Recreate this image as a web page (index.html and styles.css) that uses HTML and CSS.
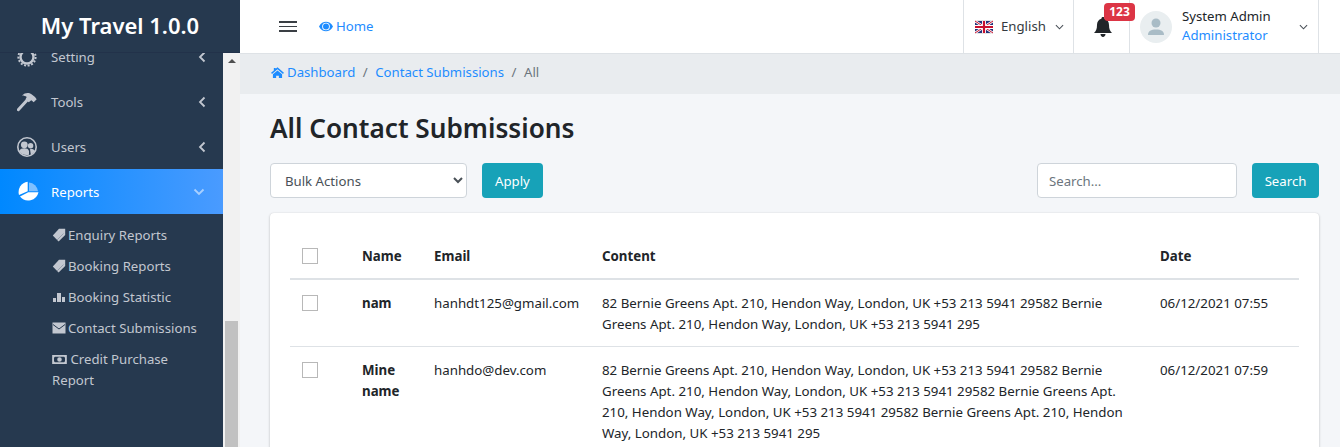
FILE: index.html
```html
<!DOCTYPE html>
<html lang="en">
<head>
  <meta charset="UTF-8">
  <meta name="viewport" content="width=device-width, initial-scale=1.0">
  <title>All Contact Submissions</title>
  <link rel="stylesheet" href="styles.css">
</head>
<body>
  <aside class="sidebar">
    <div class="brand">My Travel 1.0.0</div>
    <div class="sidebar-scroll">
      <nav class="side-nav">
        <a class="side-item">
          <svg class="side-icon" viewBox="0 0 20 20"><circle cx="10" cy="10" r="6.5" fill="none" stroke="currentColor" stroke-width="2.4"/><circle cx="10" cy="10" r="8.6" fill="none" stroke="currentColor" stroke-width="2" stroke-dasharray="2 1.6"/></svg>
          <span class="side-label">Setting</span>
          <svg class="side-caret" viewBox="0 0 8 12"><path d="M6.5 1.5 2 6l4.5 4.5" fill="none" stroke="currentColor" stroke-width="1.8"/></svg>
        </a>
        <a class="side-item">
          <svg class="side-icon" viewBox="0 0 20 20"><path d="M1.300 17.700 10 8.300" fill="none" stroke="currentColor" stroke-width="3" stroke-linecap="round"/><path d="M5 3.500C8 .3 12 .3 14.500 2.300L18 5 19.700 7.200 16.700 10.300 14.300 8.200 11.700 10.300 8.500 7.200 9.700 5C8.500 4 7 3.500 5 3.500Z" fill="currentColor"/></svg>
          <span class="side-label">Tools</span>
          <svg class="side-caret" viewBox="0 0 8 12"><path d="M6.5 1.5 2 6l4.5 4.5" fill="none" stroke="currentColor" stroke-width="1.8"/></svg>
        </a>
        <a class="side-item">
          <svg class="side-icon" viewBox="0 0 20 20"><circle cx="10" cy="10" r="9.200" fill="#26394f" stroke="currentColor" stroke-width="1.600"/><circle cx="7.300" cy="7.800" r="3.400" fill="currentColor"/><path d="M2.200 14C3 11.800 5 11.200 7.300 11.200S11.400 11.800 12 14V17.800C8 18.800 4 17.400 2.200 14Z" fill="currentColor"/><circle cx="13.600" cy="8.800" r="2.700" fill="currentColor"/><path d="M13 12.200C15 11.800 17.200 12.400 17.800 14 17 15.600 15.400 17 13.800 17.500Z" fill="currentColor"/></svg>
          <span class="side-label">Users</span>
          <svg class="side-caret" viewBox="0 0 8 12"><path d="M6.5 1.5 2 6l4.5 4.5" fill="none" stroke="currentColor" stroke-width="1.8"/></svg>
        </a>
        <a class="side-item active">
          <svg class="side-icon pie" viewBox="0 0 22 22"><path d="M10.700 .7V10.300L2 14A10.500 10.500 0 0 1 10.700 .7Z" fill="#fff"/><path d="M12 1.500A10 10 0 0 1 21 10.300H12Z" fill="#7fc0ff"/><path d="M3 15.500 11.300 11.300H21.500A10.500 10.500 0 0 1 3 15.500Z" fill="#fff"/></svg>
          <span class="side-label">Reports</span>
          <svg class="side-caret down" viewBox="0 0 12 8"><path d="M1.500 1.500 6 6l4.500-4.500" fill="none" stroke="currentColor" stroke-width="1.800"/></svg>
        </a>
        <ul class="sub-nav">
          <li><svg class="sub-icon" viewBox="0 0 14 14"><path d="M7 .8H13.200V7L6.600 13.400 .8 7.400Z" fill="currentColor"/><path d="M5 12 11.500 5.500" stroke="#8a95a3" stroke-width=".8"/></svg>Enquiry Reports</li>
          <li><svg class="sub-icon" viewBox="0 0 14 14"><path d="M7 .8H13.200V7L6.600 13.400 .8 7.400Z" fill="currentColor"/><path d="M5 12 11.500 5.500" stroke="#8a95a3" stroke-width=".8"/></svg>Booking Reports</li>
          <li><svg class="sub-icon" viewBox="0 0 14 14"><path d="M1 8H4V12H1ZM5 3H9V12H5ZM10 7H13V12H10Z" fill="currentColor"/></svg>Booking Statistic</li>
          <li><svg class="sub-icon" viewBox="0 0 14 12"><rect x=".5" y=".5" width="13" height="11" fill="currentColor"/><path d="M1 2.500 7 7 13 2.500" fill="none" stroke="#26394f" stroke-width="1"/></svg>Contact Submissions</li>
          <li><svg class="sub-icon wide" viewBox="0 0 16 12"><path fill-rule="evenodd" d="M0 1H16V11H0ZM3 3 2 4V8L3 9H13L14 8V4L13 3ZM8 3.500A2.500 2.500 0 1 1 8 8.500 2.500 2.500 0 0 1 8 3.500Z" fill="currentColor"/></svg> Credit Purchase Report</li>
        </ul>
      </nav>
      <div class="side-scrollbar">
        <span class="scroll-up"></span>
        <span class="scroll-thumb"></span>
      </div>
    </div>
  </aside>

  <div class="main">
    <header class="topbar">
      <div class="hamburger"><span></span><span></span><span></span></div>
      <a class="home-link">
        <svg class="home-eye" viewBox="0 0 16 12"><path fill-rule="evenodd" d="M0 6C2 2 5 .5 8 .5S14 2 16 6C14 10 11 11.500 8 11.500S2 10 0 6ZM8 1.600A4.400 4.400 0 1 0 8 10.400 4.400 4.400 0 0 0 8 1.600Z" fill="currentColor"/><circle cx="8" cy="6" r="3.400" fill="currentColor"/></svg>
        Home
      </a>
      <div class="top-right">
        <div class="top-cell lang">
          <svg class="flag" viewBox="0 0 18 14">
            <rect width="18" height="14" fill="#e4e4e4"/>
            <rect y="1" width="18" height="12" fill="#22327a"/>
            <path d="M0 1 18 13M18 1 0 13" stroke="#fff" stroke-width="2.400"/>
            <path d="M0 1 18 13M18 1 0 13" stroke="#c8102e" stroke-width="1"/>
            <path d="M9 1V13M0 7H18" stroke="#fff" stroke-width="4"/>
            <path d="M9 1V13M0 7H18" stroke="#c8102e" stroke-width="2.200"/>
          </svg>
          <span>English</span>
          <svg class="chev" viewBox="0 0 10 6"><path d="M1 1 5 5 9 1" fill="none" stroke="currentColor" stroke-width="1.200"/></svg>
        </div>
        <div class="top-cell bell-cell">
          <svg class="bell" viewBox="0 0 18 20"><path d="M9 0C10 0 10.600.7 10.600 1.700 13.400 2.400 15 4.800 15 8 15 12 16 14 18 16H0C2 14 3 12 3 8 3 4.800 4.600 2.400 7.400 1.700 7.400.7 8 0 9 0ZM6.500 17H11.500C11.500 18.600 10.400 20 9 20S6.500 18.600 6.500 17Z" fill="currentColor"/></svg>
          <span class="badge">123</span>
        </div>
        <div class="top-cell user">
          <div class="avatar">
            <svg viewBox="0 0 32 32"><circle cx="16" cy="12" r="4.500" fill="#a9bcc6"/><path d="M8 24C8 20 11 18.500 16 18.500S24 20 24 24Z" fill="#a9bcc6"/></svg>
          </div>
          <div class="user-text">
            <div class="user-name">System Admin</div>
            <div class="user-role">Administrator</div>
          </div>
          <svg class="chev" viewBox="0 0 10 6"><path d="M1 1 5 5 9 1" fill="none" stroke="currentColor" stroke-width="1.200"/></svg>
        </div>
      </div>
    </header>

    <div class="breadcrumb">
      <svg class="crumb-home" viewBox="0 0 14 12"><path d="M7 .3 14 6.300 13 7.500 7 2.500 1 7.500 0 6.300 3 3.700V1H5V2ZM2 8 7 3.800 12 8V12H8.500V9.500H5.500V12H2Z" fill="currentColor"/></svg>
      <a>Dashboard</a>
      <span class="crumb-sep">/</span>
      <a>Contact Submissions</a>
      <span class="crumb-sep">/</span>
      <span class="crumb-now">All</span>
    </div>

    <div class="content">
      <h1>All Contact Submissions</h1>
      <div class="toolbar">
        <div class="tool-group">
          <select class="bulk"><option>Bulk Actions</option></select>
          <button class="btn">Apply</button>
        </div>
        <div class="tool-group">
          <input class="search" type="text" placeholder="Search...">
          <button class="btn btn-search">Search</button>
        </div>
      </div>
      <div class="card">
        <table>
          <colgroup>
            <col class="c-check"><col class="c-name"><col class="c-email"><col class="c-content"><col class="c-date">
          </colgroup>
          <thead>
            <tr>
              <th><span class="check"></span></th>
              <th>Name</th>
              <th>Email</th>
              <th>Content</th>
              <th>Date</th>
            </tr>
          </thead>
          <tbody>
            <tr>
              <td><span class="check"></span></td>
              <td><b>nam</b></td>
              <td>hanhdt125@gmail.com</td>
              <td>82 Bernie Greens Apt. 210, Hendon Way, London, UK +53 213 5941 29582 Bernie Greens Apt. 210, Hendon Way, London, UK +53 213 5941 295</td>
              <td>06/12/2021 07:55</td>
            </tr>
            <tr>
              <td><span class="check"></span></td>
              <td><b>Mine name</b></td>
              <td>hanhdo@dev.com</td>
              <td>82 Bernie Greens Apt. 210, Hendon Way, London, UK +53 213 5941 29582 Bernie Greens Apt. 210, Hendon Way, London, UK +53 213 5941 29582 Bernie Greens Apt. 210, Hendon Way, London, UK +53 213 5941 29582 Bernie Greens Apt. 210, Hendon Way, London, UK +53 213 5941 295</td>
              <td>06/12/2021 07:59</td>
            </tr>
          </tbody>
        </table>
      </div>
    </div>
  </div>
</body>
</html>
```

FILE: styles.css
```css
* {
  box-sizing: border-box;
}
html, body {
  height: 100%;
}
body {
  display: flex;
  margin: 0;
  overflow: hidden;
  font-family: "Noto Sans", Arial, sans-serif;
  font-size: 13.2px;
  line-height: 21px;
  color: #212529;
  background-color: #f4f6f9;
}
a {
  color: #1e8cff;
  text-decoration: none;
}

/* sidebar */
.sidebar {
  display: flex;
  flex-direction: column;
  flex: 0 0 240px;
  height: 100%;
  background-color: #26394f;
}
.brand {
  position: relative;
  z-index: 1;
  height: 53px;
  line-height: 50px;
  text-align: center;
  font-size: 22px;
  font-weight: 600;
  color: #fff;
  background-color: #26394f;
  border-bottom: 1px solid #22324a;
}
.sidebar-scroll {
  display: flex;
  flex: 1;
  min-height: 0;
}
.side-nav {
  flex: 1;
  margin-top: -19px;
  min-width: 0;
}
.side-item {
  display: flex;
  align-items: center;
  height: 45px;
  padding: 0 17px;
  color: #c2c7d0;
}
.side-icon {
  flex: 0 0 20px;
  width: 20px;
  height: 20px;
  margin-right: 14px;
}
.side-label {
  flex: 1;
  padding-top: 2px;
}
.side-caret {
  width: 8px;
  height: 12px;
  color: #c2c7d0;
}
.side-item.active {
  color: #fff;
  background: linear-gradient(90deg, #0088ff, #4a9bff);
}
.side-icon.pie {
  flex-basis: 22px;
  width: 22px;
  height: 22px;
  margin-right: 12px;
}
.side-caret.down {
  width: 12px;
  height: 8px;
  margin-right: 1px;
  color: #a9d0ff;
}
.sub-nav {
  list-style: none;
  margin: 0;
  padding: 6px 10px 0 52px;
  color: #c2c7d0;
}
.sub-nav li {
  padding: 5px 0;
}
.sub-icon {
  width: 14px;
  height: 14px;
  margin-right: 2px;
  vertical-align: -2px;
}
.sub-icon.wide {
  width: 15px;
  height: 11px;
  margin-right: 0;
  vertical-align: -1px;
}
.side-scrollbar {
  position: relative;
  flex: 0 0 17px;
  background-color: #f1f1f1;
}
.scroll-up {
  display: block;
  width: 0;
  margin: 6px auto 0;
  border: 4px solid transparent;
  border-top: 0;
  border-bottom: 4px solid #505050;
}
.scroll-thumb {
  position: absolute;
  left: 2px;
  right: 2px;
  top: 268px;
  bottom: 0;
  background-color: #c1c1c1;
}

/* top bar */
.main {
  flex: 1;
  min-width: 0;
}
.topbar {
  display: flex;
  align-items: center;
  height: 54px;
  padding-left: 39px;
  background-color: #fff;
  border-bottom: 1px solid #dee2e6;
}
.hamburger {
  width: 18px;
  margin-right: 22px;
}
.hamburger span {
  display: block;
  height: 1.5px;
  margin: 3px 0;
  background-color: #3a3f44;
}
.home-link {
  display: flex;
  align-items: center;
  gap: 3px;
}
.home-eye {
  width: 14px;
  height: 11px;
}
.top-right {
  display: flex;
  height: 100%;
  margin-left: auto;
  padding-right: 21px;
}
.top-cell {
  display: flex;
  align-items: center;
  height: 100%;
  border-left: 1px solid #dee2e6;
}
.lang {
  width: 110px;
  padding-left: 11px;
  color: #343a40;
}
.flag {
  width: 18px;
  height: 14px;
  margin-right: 8px;
}
.chev {
  width: 9px;
  height: 6px;
  color: #495057;
}
.lang .chev {
  margin-left: 9px;
}
.bell-cell {
  position: relative;
  width: 56px;
  padding-left: 20px;
  color: #212529;
}
.bell {
  width: 18px;
  height: 20px;
}
.badge {
  position: absolute;
  top: 3px;
  left: 30px;
  z-index: 1;
  width: 31px;
  height: 18px;
  line-height: 18px;
  border-radius: 4px;
  text-align: center;
  font-size: 12px;
  font-weight: 700;
  color: #fff;
  background-color: #dc3545;
}
.user {
  width: 190px;
  padding-left: 10px;
  border-right: 1px solid #dee2e6;
}
.avatar {
  flex: 0 0 32px;
  width: 32px;
  height: 32px;
  margin-right: 10px;
  border-radius: 50%;
  background-color: #e9eef0;
}
.avatar svg {
  display: block;
}
.user-text {
  flex: 1;
  line-height: 19px;
  padding-bottom: 1px;
}
.user-role {
  color: #1e8cff;
}
.user .chev {
  margin-right: 10px;
}

/* breadcrumb */
.breadcrumb {
  display: flex;
  align-items: center;
  height: 40px;
  padding: 0 0 4px 31px;
  background-color: #e9ecef;
}
.crumb-home {
  width: 13px;
  height: 11px;
  margin-right: 3px;
  color: #1e8cff;
}
.crumb-sep {
  margin: 0 7.5px;
  color: #6c757d;
}
.crumb-now {
  color: #6c757d;
}

/* content */
.content {
  padding: 17px 21px 0 30px;
}
h1 {
  margin: 0 0 18px;
  font-size: 26.2px;
  line-height: 34px;
  font-weight: 600;
}
.toolbar {
  display: flex;
  justify-content: space-between;
  margin-bottom: 15px;
}
.tool-group {
  display: flex;
  gap: 15px;
}
.bulk, .search {
  height: 35px;
  font-family: inherit;
  font-size: 13.2px;
  color: #495057;
  background-color: #fff;
  border: 1px solid #ced4da;
  border-radius: 4px;
}
.bulk {
  width: 197px;
  padding-left: 10px;
}
.search {
  width: 200px;
  padding: 0 11px;
}
.search::placeholder {
  color: #6c757d;
}
.btn {
  height: 35px;
  padding: 0 13px;
  font-family: inherit;
  font-size: 13.2px;
  color: #fff;
  background-color: #17a2b8;
  border: none;
  border-radius: 4px;
}
.btn-search {
  width: 67px;
  padding: 0;
}
.card {
  padding: 20px;
  background-color: #fff;
  border-radius: 4px;
  box-shadow: 0 0 1px rgba(0,0,0,.125), 0 1px 3px rgba(0,0,0,.2);
}
table {
  width: 100%;
  border-collapse: collapse;
  table-layout: fixed;
  font-size: 13.3px;
}
.c-check { width: 60px; }
.c-name { width: 72px; }
.c-email { width: 168px; }
.c-content { width: 558px; }
.c-date { width: 151px; }
th, td {
  padding: 13px 12px 11px;
  text-align: left;
  vertical-align: top;
}
th {
  border-bottom: 2px solid #dee2e6;
}
td {
  border-bottom: 1px solid #dee2e6;
}
td b, th {
  font-weight: 700;
}
.check {
  display: block;
  width: 16px;
  height: 16px;
  margin-top: 2px;
  background-color: #fff;
  border: 1px solid #b8b8b8;
}
```
